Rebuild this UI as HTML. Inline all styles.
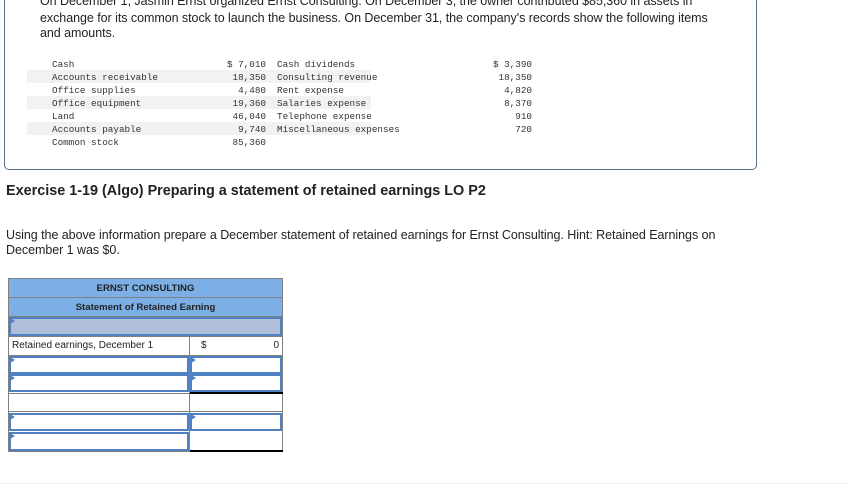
<!DOCTYPE html>
<html><head><meta charset="utf-8"><style>
*{margin:0;padding:0;box-sizing:border-box}
body{width:848px;height:485px;background:#fff;position:relative;overflow:hidden;font-family:"Liberation Sans",sans-serif;color:#222}
.box{position:absolute;left:4px;top:-10px;width:753px;height:180px;border:1px solid #5a6f8a;border-radius:5px}
.p{position:absolute;left:40px;font-size:12.5px;letter-spacing:-0.05px;color:#222;white-space:nowrap}
.m{position:absolute;font-family:"Liberation Mono",monospace;font-size:9.3px;color:#333;white-space:nowrap}
.stripe{position:absolute;left:27px;width:344px;height:13px;background:#f2f2f2}
.r{text-align:right}
.c{position:absolute;border:1px solid #808080}
.hd{background:#7bafe6;font-size:9.6px;font-weight:bold;text-align:center;color:#222}
.in{position:absolute;border:2px solid #4f80c2;background:#fff}
.in:before{content:"";position:absolute;left:-1px;top:-1px;border-left:5px solid #4f80c2;border-top:3px solid transparent;border-bottom:3px solid transparent}
</style></head><body>
<div class="box"></div>
<div class="p" style="top:-6px">On December 1, Jasmin Ernst organized Ernst Consulting. On December 3, the owner contributed $85,360 in assets in</div>
<div class="p" style="top:11px">exchange for its common stock to launch the business. On December 31, the company's records show the following items</div>
<div class="p" style="top:26px">and amounts.</div>

<div class="stripe" style="top:70px"></div>
<div class="stripe" style="top:96px"></div>
<div class="stripe" style="top:122px"></div>
<div class="m" style="left:52px;top:58px;line-height:13px">Cash<br>Accounts receivable<br>Office supplies<br>Office equipment<br>Land<br>Accounts payable<br>Common stock</div>
<div class="m r" style="left:200px;width:66px;top:58px;line-height:13px">$ 7,010<br>18,350<br>4,480<br>19,360<br>46,040<br>9,740<br>85,360</div>
<div class="m" style="left:277px;top:58px;line-height:13px">Cash dividends<br>Consulting revenue<br>Rent expense<br>Salaries expense<br>Telephone expense<br>Miscellaneous expenses</div>
<div class="m r" style="left:470px;width:62px;top:58px;line-height:13px">$ 3,390<br>18,350<br>4,820<br>8,370<br>910<br>720</div>

<div style="position:absolute;left:6px;top:183px;font-size:14.4px;font-weight:bold;letter-spacing:0px;color:#222">Exercise 1-19 (Algo) Preparing a statement of retained earnings LO P2</div>
<div class="p" style="left:6px;top:228px">Using the above information prepare a December statement of retained earnings for Ernst Consulting. Hint: Retained Earnings on</div>
<div class="p" style="left:6px;top:243px">December 1 was $0.</div>

<div class="c hd" style="left:8px;top:278px;width:275px;height:20px;line-height:19px">ERNST CONSULTING</div>
<div class="c hd" style="left:8px;top:297px;width:275px;height:20px;line-height:19px">Statement of Retained Earning</div>
<div class="c" style="left:8px;top:316px;width:275px;height:21px;background:#fff"></div>
<div class="in" style="left:9px;top:317px;width:273px;height:19px;background:#afbfd9"></div>

<div class="c" style="left:8px;top:336px;width:182px;height:20px;font-size:10px;line-height:18px;padding-left:3px">Retained earnings, December 1</div>
<div class="c" style="left:189px;top:336px;width:94px;height:20px;font-size:10px;line-height:18px;padding:0 3px 0 11px"><span>$</span><span style="float:right">0</span></div>

<div class="c" style="left:8px;top:355px;width:182px;height:97px"></div>
<div class="c" style="left:189px;top:355px;width:94px;height:97px"></div>
<div style="position:absolute;left:8px;top:393px;width:275px;height:19px;border-top:1px solid #808080;border-bottom:1px solid #808080"></div>

<div class="in" style="left:9px;top:356px;width:180px;height:18px"></div>
<div class="in" style="left:190px;top:356px;width:92px;height:18px"></div>
<div class="in" style="left:9px;top:374px;width:180px;height:18px"></div>
<div class="in" style="left:190px;top:374px;width:92px;height:18px"></div>
<div style="position:absolute;left:190px;top:392px;width:93px;height:2px;background:#000"></div>
<div class="in" style="left:9px;top:413px;width:180px;height:18px"></div>
<div class="in" style="left:190px;top:413px;width:92px;height:18px"></div>
<div class="in" style="left:9px;top:432px;width:180px;height:19px"></div>
<div style="position:absolute;left:190px;top:450px;width:93px;height:2px;background:#000"></div>

<div style="position:absolute;left:0;top:483px;width:848px;height:1px;background:#eee"></div>
</body></html>
